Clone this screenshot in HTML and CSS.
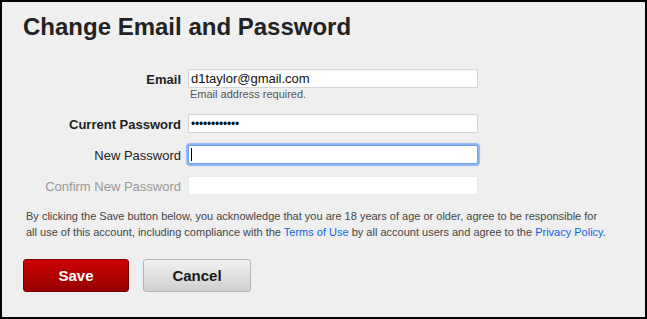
FILE: index.html
```html
<!DOCTYPE html>
<html lang="en">
<head>
<meta charset="utf-8">
<title>Change Email and Password</title>
<link rel="stylesheet" href="styles.css">
</head>
<body>
<div class="page">
  <h1 class="title">Change Email and Password</h1>
  <form class="form">
    <div class="row row-email">
      <label class="label label-strong" for="email">Email</label>
      <div class="field">
        <input class="input" id="email" type="text" value="d1taylor@gmail.com">
        <div class="hint">Email address required.</div>
      </div>
    </div>
    <div class="row">
      <label class="label label-strong" for="cur">Current Password</label>
      <div class="field">
        <input class="input input-pw" id="cur" type="text" value="••••••••••••">
      </div>
    </div>
    <div class="row">
      <label class="label" for="new">New Password</label>
      <div class="field field-focus">
        <input class="input input-focus" id="new" type="password" value="">
        <span class="caret"></span>
      </div>
    </div>
    <div class="row">
      <label class="label label-muted" for="conf">Confirm New Password</label>
      <div class="field">
        <input class="input input-muted" id="conf" type="password" value="">
      </div>
    </div>
    <p class="legal">By clicking the Save button below, you acknowledge that you are 18 years of age or older, agree to be responsible for<br>all use of this account, including compliance with the <a href="#" class="link">Terms of Use</a> by all account users and agree to the <a href="#" class="link">Privacy Policy</a>.</p>
    <div class="actions">
      <button type="button" class="btn btn-save">Save</button>
      <button type="button" class="btn btn-cancel">Cancel</button>
    </div>
  </form>
</div>
</body>
</html>
```
FILE: styles.css
```css
* { box-sizing: border-box; }

html, body {
  margin: 0;
  padding: 0;
  background: #000;
}

.page {
  width: 647px;
  height: 319px;
  border: 2px solid #000;
  background: #efefef;
  padding-top: 11px;
  font-family: "Liberation Sans", Arial, sans-serif;
  color: #222;
  overflow: hidden;
}

.title {
  margin: 0 0 0 21px;
  font-size: 24px;
  line-height: 28px;
  font-weight: bold;
  color: #222;
}

.form {
  margin: 28px 0 0 0;
}

.row {
  display: grid;
  grid-template-columns: 179px 290px;
  column-gap: 7px;
  align-items: start;
  margin-bottom: 12px;
}

.row-email {
  margin-bottom: 13px;
}

.label {
  text-align: right;
  font-size: 13px;
  line-height: 19px;
  padding-top: 1px;
  height: 19px;
  color: #222;
}

.label-strong { font-weight: bold; }

.label-muted { color: #999; }

.field {
  display: flex;
  flex-direction: column;
}

.field-focus {
  position: relative;
}

.input {
  width: 290px;
  height: 19px;
  margin: 0;
  padding: 0 2px;
  border: 1px solid #d6d6d6;
  border-radius: 0;
  background: #fff;
  font-family: "Liberation Sans", Arial, sans-serif;
  font-size: 13px;
  color: #111;
  outline: none;
  box-shadow: inset 0 1px 1px rgba(0,0,0,0.04);
}

.input-pw {
  font-size: 12px;
  letter-spacing: -0.2px;
}

.input-focus {
  border: 1px solid #6f9fe6;
  box-shadow: 0 0 1px 2px #8cb6f2;
  border-radius: 2px;
}

.caret {
  position: absolute;
  left: 3px;
  top: 3px;
  width: 1px;
  height: 13px;
  background: #000;
}

.input-muted {
  border-color: #ececec;
  box-shadow: none;
}

.hint {
  font-size: 11px;
  line-height: 13px;
  color: #555;
  padding-left: 2px;
}

.legal {
  margin: 13px 0 0 24px;
  width: 610px;
  font-size: 11px;
  line-height: 16px;
  color: #444;
}

.link {
  color: #0c66e0;
  text-decoration: none;
}

.actions {
  display: flex;
  gap: 14px;
  margin: 19px 0 0 21px;
}

.btn {
  height: 33px;
  border-radius: 3px;
  font-family: "Liberation Sans", Arial, sans-serif;
  font-size: 15px;
  font-weight: bold;
  padding: 0;
  cursor: pointer;
}

.btn-save {
  width: 106px;
  color: #fff;
  border: 1px solid #7d0000;
  background: linear-gradient(#cc0000, #970000);
}

.btn-cancel {
  width: 108px;
  color: #1a1a1a;
  border: 1px solid #b4b4b4;
  background: linear-gradient(#f1f1f1, #cfcfcf);
}
```
